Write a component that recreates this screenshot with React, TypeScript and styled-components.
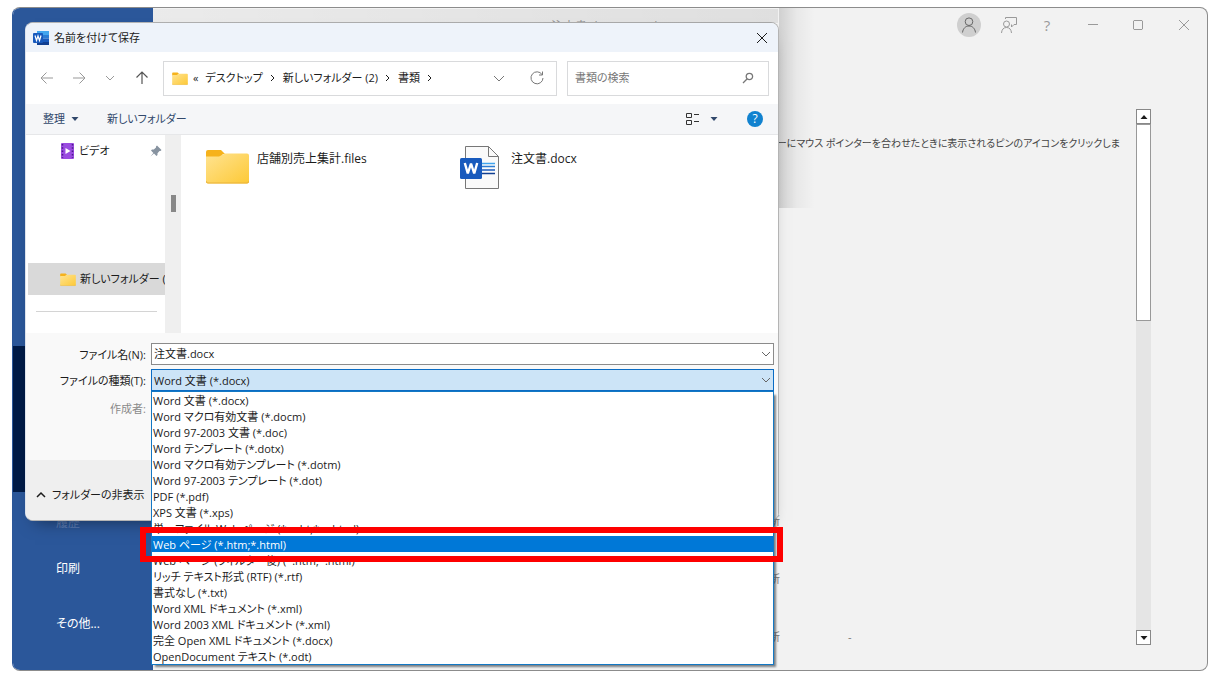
import React from "react";
import styled, { createGlobalStyle, css } from "styled-components";

const Global = createGlobalStyle`
  *, *::before, *::after { box-sizing: border-box; }
  body {
    margin: 0;
    background: #fff;
    color: #1b1b1b;
    font: 11px/16px "Open Sans", "Noto Sans CJK JP", sans-serif;
    font-feature-settings: "palt";
  }
  button, input, select {
    font: inherit;
    font-feature-settings: inherit;
    color: inherit;
    margin: 0;
    padding: 0;
    border: 0;
    background: none;
    outline: none;
  }
  ul { list-style: none; margin: 0; padding: 0; }
  p { margin: 0; }
  svg { display: block; flex: none; }
`;

const Page = styled.div`
  padding: 7px 12px 11px;
`;

const AppWindow = styled.div`
  position: relative;
  display: flex;
  min-height: 664px;
  border: 1px solid #8c8c8c;
  border-left-color: #2b579a;
  border-radius: 8px;
  background: #f2f2f2;
`;

const Sidebar = styled.nav`
  flex: none;
  width: 140px;
  padding-top: 338px;
  border-radius: 7px 0 0 7px;
  background: #2b579a;
`;

const SidebarButton = styled.button<{ $current?: boolean; $muted?: boolean }>`
  display: block;
  width: 100%;
  height: ${(p) => (p.$current ? 146 : p.$muted ? 49 : 55)}px;
  padding: ${(p) => (p.$muted ? "12px 0 0 43px" : "0 0 0 43px")};
  font-size: 12px;
  text-align: left;
  color: ${(p) => (p.$muted ? "#5f7fb5" : "#fff")};
  background: ${(p) => (p.$current ? "#001b47" : "transparent")};
`;

const Backstage = styled.main`
  flex: 1;
  display: flex;
  flex-direction: column;
  min-width: 0;
`;

const AppBar = styled.header`
  display: flex;
  align-items: center;
  justify-content: space-between;
  height: 33px;
  padding-left: 398px;
  color: #9a9a9a;
`;

const AppTitle = styled.span`
  padding-top: 4px;
  font-size: 12px;
`;

const WindowButtons = styled.div`
  display: flex;
  align-items: center;
`;

const WindowButton = styled.button<{ $width?: number }>`
  display: flex;
  align-items: center;
  justify-content: center;
  width: ${(p) => p.$width ?? 46}px;
  height: 24px;
  font-size: 15px;
`;

const Avatar = styled.button`
  display: flex;
  align-items: center;
  justify-content: center;
  width: 24px;
  height: 24px;
  margin-right: 14px;
  border-radius: 50%;
  background: #cfcfcf;
  color: #666;
`;

const Content = styled.div`
  flex: 1;
  display: flex;
  padding: 68px 56px 25px 0;
`;

const Recent = styled.section`
  flex: 1;
  display: flex;
  flex-direction: column;
  justify-content: space-between;
  min-width: 0;
  padding: 25px 16px 0 0;
`;

const Hint = styled.p`
  line-height: 18px;
  font-size: 10px;
  text-align: right;
  white-space: nowrap;
  color: #444;
`;

const RecentRow = styled.li`
  display: flex;
  gap: 68px;
  align-items: flex-end;
  height: 58px;
  padding-left: 616px;
  color: #777;
`;

const ScrollBar = styled.div`
  flex: none;
  display: flex;
  flex-direction: column;
  width: 15px;
  background: #e5e5e5;
`;

const ScrollArrow = styled.button`
  display: flex;
  align-items: center;
  justify-content: center;
  height: 15px;
  border: 1px solid #888;
  background: #fff;
`;

const ScrollThumb = styled.div`
  flex: none;
  height: 197px;
  margin-bottom: auto;
  border: 1px solid #999;
  background: #fff;
`;

const Dialog = styled.section`
  position: absolute;
  left: 12px;
  top: 14px;
  width: 754px;
  border: 1px solid #b4b4b4;
  border-left-color: #dde3ec;
  border-radius: 8px;
  background: #fff;
  box-shadow: 0 10px 16px -10px rgba(0, 0, 0, 0.5);

  &::before {
    content: "";
    position: absolute;
    left: 127px;
    right: 0;
    bottom: 100%;
    height: 14px;
    background: linear-gradient(to right, rgba(0, 0, 0, 0.03), rgba(0, 0, 0, 0.08));
  }
  &::after {
    content: "";
    position: absolute;
    left: 100%;
    top: -15px;
    width: 36px;
    height: 200px;
    margin-left: 1px;
    background: linear-gradient(to right, rgba(0, 0, 0, 0.14), rgba(0, 0, 0, 0.04) 50%, transparent);
  }
`;

const TitleBar = styled.header`
  display: flex;
  align-items: center;
  gap: 5px;
  height: 29px;
  padding: 0 8px 0 7px;
  border-radius: 7px 7px 0 0;
  background: #eef3fa;
`;

const Title = styled.h1`
  flex: 1;
  margin: 0;
  font-size: 11px;
  font-weight: 400;
`;

const IconButton = styled.button`
  display: flex;
  align-items: center;
  justify-content: center;
  width: 16px;
  height: 20px;
`;

const NavRow = styled.div`
  display: flex;
  align-items: center;
  gap: 10px;
  height: 52px;
  padding: 0 9px 0 13px;
`;

const NavButtons = styled.div`
  flex: none;
  display: flex;
  justify-content: space-between;
  width: 114px;
  padding-right: 3px;
  color: #999;

  button:last-child {
    color: #555;
  }
`;

const AddressBar = styled.div`
  flex: 1;
  display: flex;
  align-items: center;
  height: 35px;
  padding: 0 11px 0 8px;
  border: 1px solid #d9dadc;
`;

const Crumbs = styled.div`
  flex: 1;
  display: flex;
  align-items: center;
  gap: 7px;
  margin-left: 5px;
  white-space: nowrap;
`;

const AddressTools = styled.div`
  display: flex;
  align-items: center;
  gap: 22px;
  color: #777;
`;

const SearchBox = styled.label`
  display: flex;
  align-items: center;
  width: 202px;
  height: 35px;
  padding: 0 14px 0 7px;
  border: 1px solid #d9dadc;
  color: #777;

  input {
    flex: 1;
    min-width: 0;
  }
  input::placeholder {
    color: #777;
  }
`;

const Toolbar = styled.div`
  display: flex;
  align-items: center;
  height: 31px;
  padding: 0 15px 0 17px;
  border-bottom: 1px solid #e6e7e9;
  background: #f5f6f8;
  color: #31486b;
`;

const ToolbarButton = styled.button`
  display: flex;
  align-items: center;
  gap: 6px;
  margin-right: 28px;
`;

const ToolbarEnd = styled.div`
  display: flex;
  align-items: center;
  gap: 10px;
  margin-left: auto;
`;

const HelpButton = styled.button`
  width: 16px;
  height: 16px;
  margin-left: 19px;
  border-radius: 50%;
  background: #1182cf;
  color: #fff;
  font-size: 12px;
`;

const Browser = styled.div`
  display: flex;
  height: 198px;
`;

const Places = styled.nav`
  flex: none;
  display: flex;
  flex-direction: column;
  width: 139px;
  padding-left: 2px;
`;

const PlaceButton = styled.button<{ $current?: boolean }>`
  display: flex;
  align-items: center;
  gap: 4px;
  height: 32px;
  padding-left: 32px;
  overflow: hidden;
  white-space: nowrap;
  background: ${(p) => (p.$current ? "#d9d9d9" : "transparent")};
  ${(p) =>
    !p.$current &&
    css`
      margin-bottom: 96px;
      padding-right: 3px;
    `}

  span {
    flex: 1;
    text-align: left;
  }
`;

const PlaceDivider = styled.hr`
  width: 121px;
  margin: 16px 8px 0;
  border: 0;
  border-top: 1px solid #d4d4d4;
`;

const PaneScroll = styled.div`
  flex: none;
  width: 16px;
  padding: 60px 5px 0 6px;
  background: #efefef;

  &::before {
    content: "";
    display: block;
    height: 17px;
    background: #888;
  }
`;

const Files = styled.ul`
  flex: 1;
  display: grid;
  grid-template-columns: 254px 1fr;
  align-content: start;
  padding: 10px 0 0 25px;
  font-size: 12px;
`;

const FileItem = styled.li`
  display: flex;
  gap: 8px;
  height: 46px;

  span {
    padding-top: 6px;
  }
`;

const Fields = styled.div`
  display: grid;
  grid-template-columns: 120px 1fr;
  column-gap: 5px;
  row-gap: 4px;
  align-content: start;
  height: 127px;
  padding: 10px 4px 0 0;
  background: #f9f9f9;
  line-height: 22px;
`;

const FieldLabel = styled.label<{ $muted?: boolean }>`
  text-align: right;
  white-space: nowrap;
  line-height: ${(p) => (p.$muted ? 28 : 24)}px;
  height: 22px;
  color: ${(p) => (p.$muted ? "#8a8a8a" : "inherit")};
`;

const Combo = styled.div<{ $open?: boolean }>`
  position: relative;
  display: flex;
  align-items: center;
  height: 22px;
  padding: 0 2px;
  border: 1px solid ${(p) => (p.$open ? "#0a6cc4" : "#8b8b8b")};
  background: ${(p) => (p.$open ? "#cce4f7" : "#fff")};

  input, select {
    flex: 1;
    appearance: none;
    height: 20px;
  }
  > svg {
    color: #666;
  }
`;

const Menu = styled.ul`
  position: absolute;
  z-index: 2;
  left: -1px;
  right: -1px;
  top: 21px;
  border: 1px solid #1378c4;
  background: #fff;
  line-height: 18px;
  box-shadow: 3px 3px 2px -1px rgba(40, 50, 60, 0.6);
`;

const MenuItem = styled.li<{ $selected?: boolean }>`
  height: 16px;
  padding-left: 1px;
  white-space: nowrap;
  ${(p) =>
    p.$selected &&
    css`
      position: relative;
      background: #0078d7;
      color: #fff;

      &::after {
        content: "";
        position: absolute;
        z-index: 1;
        inset: -9px -10px -10px -12px;
        border: 6px solid #fe0000;
      }
    `}
`;

const Footer = styled.footer`
  display: flex;
  align-items: center;
  height: 60px;
  padding: 10px 0 0 10px;
  border-radius: 0 0 7px 7px;
  background: #efefef;
`;

const FooterButton = styled.button`
  display: flex;
  align-items: center;
  gap: 6px;
`;

type LineProps = { d: string; w?: number; h?: number; sw?: number };
const Line = ({ d, w = 16, h = 16, sw = 1 }: LineProps) => (
  <svg width={w} height={h} viewBox={`0 0 ${w} ${h}`} fill="none" stroke="currentColor" strokeWidth={sw} aria-hidden>
    <path d={d} />
  </svg>
);

const Caret = ({ up }: { up?: boolean }) => (
  <svg width="8" height="6" viewBox="0 0 8 6" fill="currentColor" aria-hidden>
    <path d={up ? "M4 1 7.500 5H.5Z" : "M.5 1h7L4 5Z"} />
  </svg>
);

const ComboChevron = () => <Line w={10} h={8} d="M1 2 5 6 9 2" />;

const FolderIcon = ({ large }: { large?: boolean }) => (
  <svg width={large ? 43 : 16} height={large ? 44 : 16} viewBox={large ? "0 0 43 44" : "0 -2 43 44"} aria-hidden>
    <defs>
      <linearGradient id="folder" x1="0" y1="0" x2="1" y2="1">
        <stop offset="0" stopColor="#ffe391" />
        <stop offset="1" stopColor="#fdc936" />
      </linearGradient>
    </defs>
    <path d="M0 7q0-2 2-2h13l4 4h-2l-4 5H0Z" fill="#f6b21b" />
    <path d="M0 11.500h13l6-3h22q2 0 2 2v26q0 2-2 2H2q-2 0-2-2Z" fill="url(#folder)" />
    <path d="M0 36q0 2 2 2h39q2 0 2-2" fill="none" stroke="#e9b23a" />
  </svg>
);

const WordIcon = () => (
  <svg width="16" height="16" viewBox="0 0 16 16" aria-hidden>
    <path d="M4 1h12v4H4Z" fill="#41a5ee" />
    <path d="M4 5h12v3.500H4Z" fill="#2b7cd3" />
    <path d="M4 8.500h12V12H4Z" fill="#185abd" />
    <path d="M4 12h12v3H4Z" fill="#103f91" />
    <rect y="3" width="10" height="10" rx="1" fill="#185abd" />
    <path d="M2 5.500 3.500 10.500 5 6 6.500 10.500 8 5.500" fill="none" stroke="#fff" strokeWidth="1.200" />
  </svg>
);

const DocIcon = () => (
  <svg width="43" height="46" viewBox="0 0 43 46" aria-hidden>
    <path d="M5.500 1.500h23l10 10v32h-33Z" fill="#fafafa" stroke="#777" />
    <path d="M28.500 1.500v10h10" fill="none" stroke="#777" />
    <path d="M22 18.500h13" stroke="#41a5ee" strokeWidth="1.500" />
    <path d="M22 21.500h13" stroke="#2b7cd3" strokeWidth="1.500" />
    <path d="M22 25h13" stroke="#185abd" strokeWidth="1.500" />
    <path d="M22 28.500h13" stroke="#103f91" strokeWidth="1.500" />
    <rect y="13" width="22" height="21" rx="1.500" fill="#185abd" />
    <path d="M4.800 18 7.800 28.500 11 18.500 14.200 28.500 17.200 18" fill="none" stroke="#fff" strokeWidth="2.400" strokeLinejoin="bevel" />
  </svg>
);

const VideoIcon = () => (
  <svg width="15" height="16" viewBox="0 0 15 16" aria-hidden>
    <rect x="1" width="13" height="16" rx="1" fill="#9a4be0" />
    <path d="M2.500 1v14M12.500 1v14" stroke="#4d1b8c" strokeWidth="1.500" strokeDasharray="1.500 1.800" />
    <path d="M5.500 5v6l5-3Z" fill="#fff" />
  </svg>
);

const PinIcon = () => (
  <svg width="12" height="12" viewBox="0 0 12 12" aria-hidden>
    <path d="M7 .5 11.500 5 10.500 6 9.500 6 7.500 8.200V10L6.500 11 4 8.500.5 11.500 3.400 8 1 5.500 2 4.500h1.800L6 2.500v-1Z" fill="#8793a0" />
  </svg>
);

const ViewIcon = () => (
  <svg width="14" height="14" viewBox="0 0 14 14" fill="none" stroke="#333" aria-hidden>
    <path d="M1.500 1.500h5v4h-5ZM1.500 8.500h5v4h-5ZM9 2.500h5M9 9.500h5" />
  </svg>
);

const fileTypes = [
  "Word 文書 (*.docx)",
  "Word マクロ有効文書 (*.docm)",
  "Word 97-2003 文書 (*.doc)",
  "Word テンプレート (*.dotx)",
  "Word マクロ有効テンプレート (*.dotm)",
  "Word 97-2003 テンプレート (*.dot)",
  "PDF (*.pdf)",
  "XPS 文書 (*.xps)",
  "単一ファイル Web ページ (*.mht;*.mhtml)",
  "Web ページ (*.htm;*.html)",
  "Web ページ (フィルター後) (*.htm;*.html)",
  "リッチ テキスト形式 (RTF) (*.rtf)",
  "書式なし (*.txt)",
  "Word XML ドキュメント (*.xml)",
  "Word 2003 XML ドキュメント (*.xml)",
  "完全 Open XML ドキュメント (*.docx)",
  "OpenDocument テキスト (*.odt)",
];
const highlighted = "Web ページ (*.htm;*.html)";

const SaveDialog = () => (
  <Dialog role="dialog" aria-labelledby="dialog-title">
    <TitleBar>
      <WordIcon />
      <Title id="dialog-title">名前を付けて保存</Title>
      <IconButton aria-label="閉じる">
        <Line d="M3 3 13 13M13 3 3 13" />
      </IconButton>
    </TitleBar>
    <NavRow>
      <NavButtons>
        <IconButton aria-label="戻る"><Line d="M14 8H2M7.500 2.500 2 8l5.500 5.500" /></IconButton>
        <IconButton aria-label="進む"><Line d="M2 8h12M8.500 2.500 14 8l-5.500 5.500" /></IconButton>
        <IconButton aria-label="履歴"><Line d="M4 6 8 10 12 6" /></IconButton>
        <IconButton aria-label="上へ"><Line sw={1.2} d="M8 14V2M2.500 7.500 8 2l5.500 5.500" /></IconButton>
      </NavButtons>
      <AddressBar>
        <FolderIcon />
        <Crumbs>
          <span>«</span>
          <span>デスクトップ</span>
          <Line w={6} h={8} d="M1 1 4 4 1 7" />
          <span>新しいフォルダー (2)</span>
          <Line w={6} h={8} d="M1 1 4 4 1 7" />
          <span>書類</span>
          <Line w={6} h={8} d="M1 1 4 4 1 7" />
        </Crumbs>
        <AddressTools>
          <IconButton aria-label="以前の場所"><Line d="M3 6 8 11 13 6" /></IconButton>
          <IconButton aria-label="更新"><Line d="M13 4.500A6 6 0 1 0 14 8M13.500 1.500V5H10" /></IconButton>
        </AddressTools>
      </AddressBar>
      <SearchBox>
        <input aria-label="書類の検索" placeholder="書類の検索" />
        <Line w={12} h={12} sw={1.3} d="M4.200 4.500a3.200 3.200 0 1 1 6.400 0a3.200 3.200 0 1 1-6.400 0M5 7 1 11" />
      </SearchBox>
    </NavRow>
    <Toolbar>
      <ToolbarButton>整理 <Caret /></ToolbarButton>
      <ToolbarButton>新しいフォルダー</ToolbarButton>
      <ToolbarEnd>
        <IconButton aria-label="表示"><ViewIcon /></IconButton>
        <Caret />
        <HelpButton aria-label="ヘルプ">?</HelpButton>
      </ToolbarEnd>
    </Toolbar>
    <Browser>
      <Places>
        <PlaceButton>
          <VideoIcon />
          <span>ビデオ</span>
          <PinIcon />
        </PlaceButton>
        <PlaceButton $current>
          <FolderIcon />
          <span>新しいフォルダー (2)</span>
        </PlaceButton>
        <PlaceDivider />
      </Places>
      <PaneScroll />
      <Files>
        <FileItem>
          <FolderIcon large />
          <span>店舗別売上集計.files</span>
        </FileItem>
        <FileItem>
          <DocIcon />
          <span>注文書.docx</span>
        </FileItem>
      </Files>
    </Browser>
    <Fields>
      <FieldLabel htmlFor="file-name">ファイル名(N):</FieldLabel>
      <Combo>
        <input id="file-name" defaultValue="注文書.docx" />
        <ComboChevron />
      </Combo>
      <FieldLabel htmlFor="file-type">ファイルの種類(T):</FieldLabel>
      <Combo $open>
        <select id="file-type" defaultValue={fileTypes[0]}>
          {fileTypes.map((type) => (
            <option key={type}>{type}</option>
          ))}
        </select>
        <ComboChevron />
        <Menu role="listbox" aria-label="ファイルの種類">
          {fileTypes.map((type) => (
            <MenuItem key={type} role="option" aria-selected={type === highlighted} $selected={type === highlighted}>
              {type}
            </MenuItem>
          ))}
        </Menu>
      </Combo>
      <FieldLabel as="span" $muted>作成者:</FieldLabel>
    </Fields>
    <Footer>
      <FooterButton>
        <Line w={10} h={8} sw={1.5} d="M1 6 5 2 9 6" />
        フォルダーの非表示
      </FooterButton>
    </Footer>
  </Dialog>
);

export default function App() {
  return (
    <Page>
      <Global />
      <AppWindow>
        <Sidebar>
          <SidebarButton $current aria-label="名前を付けて保存" />
          <SidebarButton $muted>履歴</SidebarButton>
          <SidebarButton>印刷</SidebarButton>
          <SidebarButton>その他...</SidebarButton>
        </Sidebar>
        <Backstage>
          <AppBar>
            <AppTitle>注文書.docx - Word</AppTitle>
            <WindowButtons>
              <Avatar aria-label="アカウント">
                <Line d="M8 8.500a3.800 3.800 0 1 0 0-7.600 3.800 3.800 0 0 0 0 7.600M1.500 15.500c.5-4 3-6.500 6.500-6.500s6 2.500 6.500 6.500" />
              </Avatar>
              <WindowButton $width={28} aria-label="フィードバック">
                <Line w={18} h={18} d="M6.500 11a3 3 0 1 0 0-6 3 3 0 0 0 0 6M1.500 17c.3-3.600 2-5.500 5-5.500s4.700 1.900 5 5.500M5.500 3V1.500h11v7H14l-2.500 2.500V8.500" />
              </WindowButton>
              <WindowButton $width={48} aria-label="ヘルプ">?</WindowButton>
              <WindowButton $width={44} aria-label="最小化"><Line w={12} h={12} d="M1 5.500h10" /></WindowButton>
              <WindowButton aria-label="最大化"><Line w={12} h={12} d="M2 1.500h8l.5.500v8l-.5.500H2l-.5-.5V2Z" /></WindowButton>
              <WindowButton aria-label="閉じる"><Line w={12} h={12} d="M1 1 11 11M11 1 1 11" /></WindowButton>
            </WindowButtons>
          </AppBar>
          <Content>
            <Recent>
              <Hint>ーにマウス ポインターを合わせたときに表示されるピンのアイコンをクリックしま</Hint>
              <ul>
                <RecentRow>新</RecentRow>
                <RecentRow>新</RecentRow>
                <RecentRow>新<span>-</span></RecentRow>
              </ul>
            </Recent>
            <ScrollBar>
              <ScrollArrow aria-label="上へスクロール"><Caret up /></ScrollArrow>
              <ScrollThumb />
              <ScrollArrow aria-label="下へスクロール"><Caret /></ScrollArrow>
            </ScrollBar>
          </Content>
        </Backstage>
        <SaveDialog />
      </AppWindow>
    </Page>
  );
}
